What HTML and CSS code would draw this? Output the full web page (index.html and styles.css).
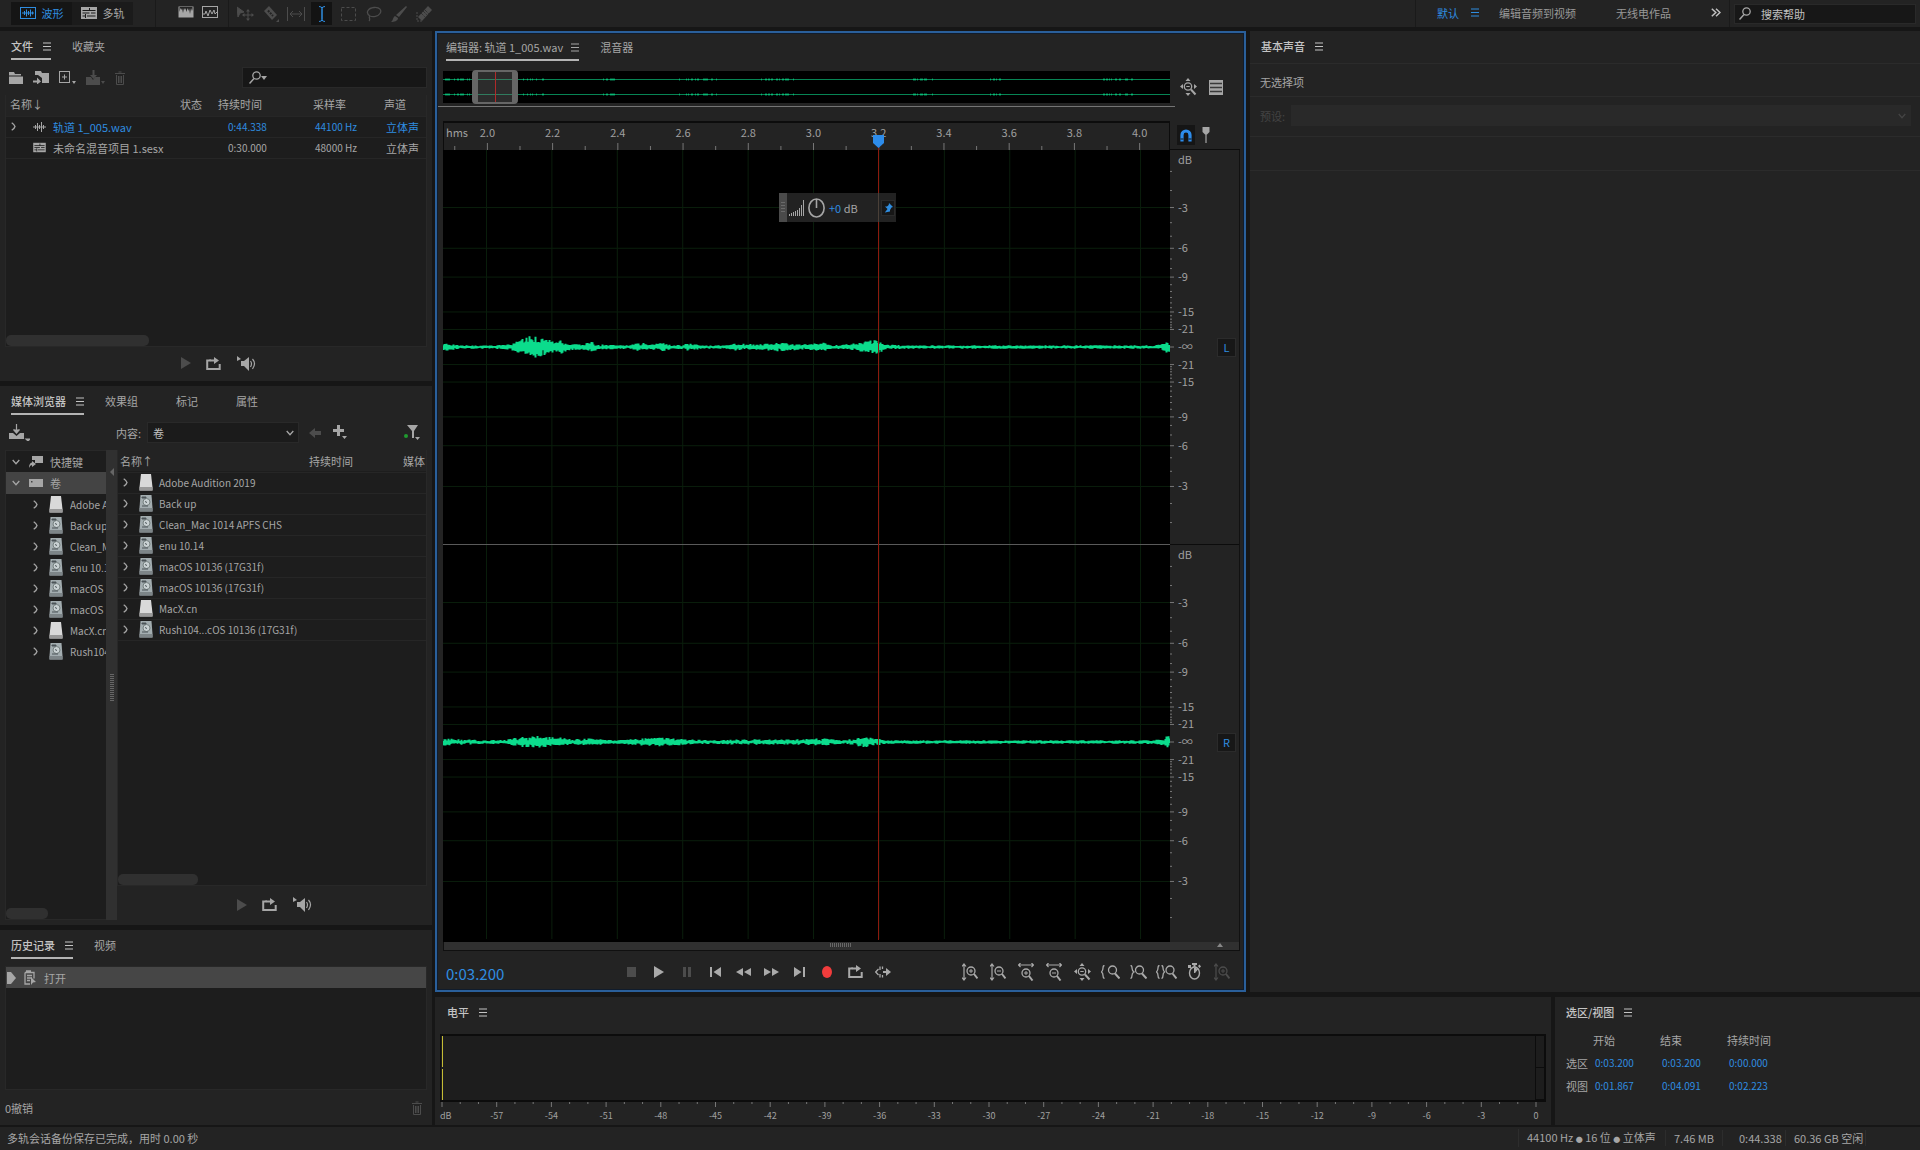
FILE: index.html
```
<!DOCTYPE html>
<html lang="zh-CN">
<head>
	<meta charset="UTF-8">
	<title>Audition</title>
	<link rel="stylesheet" href="styles.css">
</head>
<body>
<svg class="defs" aria-hidden="true">
	<symbol id="i-menu" viewBox="0 0 8 9"><path d="M0 1h8M0 4.500h8M0 8h8" stroke="currentColor"/></symbol>
	<symbol id="i-wave" viewBox="0 0 16 14"><rect x=".5" y="1.500" width="15" height="11" fill="none" stroke="currentColor"/><path d="M2 7h12M4.500 5v4M6.500 3.500v7M8.500 5v4M10.500 3.500v7M12.500 5.500v3" stroke="currentColor"/></symbol>
	<symbol id="i-multi" viewBox="0 0 16 14"><path d="M0 1h16v12H0z" fill="currentColor"/><path d="M1.500 4.500h13M1.500 7h7M10 7h4.500M1.500 10h3M6 10h8.500M8.500 2v3M4.500 8v4" stroke="#1b1b1b"/></symbol>
	<symbol id="i-spectrum" viewBox="0 0 16 14"><path d="M.5 1.500h15v11H.5z" fill="currentColor"/><path d="M1.500 2v5l1-4 1 2 .5-2 1 5 1-5 1 2 .5-2 1 4 1-4 1 3 .5-3 1 6 1-6 1 3 .5-2V2z" fill="#242424"/></symbol>
	<symbol id="i-pitch" viewBox="0 0 16 14"><rect x=".5" y="1.500" width="15" height="11" fill="none" stroke="currentColor"/><path d="M1 9h2l1-3 2 5 2-6 2 4 2-4 1 4 2-2" fill="none" stroke="currentColor"/></symbol>
	<symbol id="i-move" viewBox="0 0 17 16"><path d="M0 1l7 5-4 1-2 4zM11 4v10M6 9h10" fill="currentColor" stroke="currentColor"/><path d="M9 5.500L11 3l2 2.500zM9 12.500l2 2.500 2-2.500zM7.500 7L5 9l2.500 2zM14.500 7L17 9l-2.500 2z" fill="currentColor"/></symbol>
	<symbol id="i-razor" viewBox="0 0 16 16"><path d="M6 0l8 9-5 5-8-9z" fill="currentColor"/><path d="M5 4.500l5 5.500" stroke="#232323" stroke-width="2" stroke-dasharray="2 1"/><path d="M16 13v3h-3z" fill="currentColor"/></symbol>
	<symbol id="i-slip" viewBox="0 0 18 16"><path d="M.5 1v14M17.500 1v14M3 8h12M6 5L3 8l3 3M12 5l3 3-3 3" fill="none" stroke="currentColor"/></symbol>
	<symbol id="i-ibeam" viewBox="0 0 8 16"><path d="M1 .5q3 0 3 2v11q0 2-3 2M7 .5q-3 0-3 2v11q0 2 3 2" fill="none" stroke="currentColor"/></symbol>
	<symbol id="i-marquee" viewBox="0 0 15 16"><rect x=".5" y="1.500" width="14" height="13" fill="none" stroke="currentColor" stroke-dasharray="3 2"/></symbol>
	<symbol id="i-lasso" viewBox="0 0 16 16"><path d="M4 10C-1 7 2 2 8 1.500s8 3 6 6-7 4-10 2.500c-2 1 1 3-1 5" fill="none" stroke="currentColor" stroke-width="1.300"/></symbol>
	<symbol id="i-brush" viewBox="0 0 16 16"><path d="M15 0l1 1-8 10-3-2zM4 10l3 2c0 3-4 4-7 4 2-1 2-5 4-6z" fill="currentColor"/></symbol>
	<symbol id="i-heal" viewBox="0 0 16 16"><path d="M12 0l4 4-10 11-4-4z" fill="currentColor"/><path d="M7 5l4 4M5 7l4 4M9 4l4 4" stroke="#232323" stroke-dasharray="1 1"/><path d="M1 6v9h5" fill="none" stroke="currentColor" stroke-dasharray="2 1"/></symbol>
	<symbol id="i-folder" viewBox="0 0 14 12"><path d="M0 0h5l1 2h6v1.500H0zM0 4.500h14V12H0z" fill="currentColor"/></symbol>
	<symbol id="i-import" viewBox="0 0 16 13"><path d="M2 0h6l1 2h7v10H9V7L5 4H2zM0 9.500h4V6.500l4 4-4 3v-2H0z" fill="currentColor"/></symbol>
	<symbol id="i-new" viewBox="0 0 17 14"><rect x=".5" y=".5" width="10" height="11" fill="none" stroke="currentColor"/><path d="M3 6h5M5.500 3.500v5" stroke="currentColor"/><path d="M13 10h4l-2 3z" fill="currentColor"/></symbol>
	<symbol id="i-insert" viewBox="0 0 19 15"><path d="M0 7h5l2 3 2-3h5v8H0z" fill="currentColor"/><path d="M6.500 0h2v5H11L7.500 9 4 5h2.500zM15 11h4l-2 3z" fill="currentColor"/></symbol>
	<symbol id="i-trash" viewBox="0 0 10 14"><path d="M0 2.500h10M3.500 1h3" stroke="currentColor"/><path d="M1.500 4v9.500h7V4M3.500 5v7M5 5v7M6.500 5v7" fill="none" stroke="currentColor"/></symbol>
	<symbol id="i-search" viewBox="0 0 12 13"><circle cx="7.500" cy="4.500" r="3.700" fill="none" stroke="currentColor" stroke-width="1.300"/><path d="M5 7.500L.5 12.500" stroke="currentColor" stroke-width="1.500"/></symbol>
	<symbol id="i-down" viewBox="0 0 6 4"><path d="M0 0h6L3 4z" fill="currentColor"/></symbol>
	<symbol id="i-chevron" viewBox="0 0 5 9"><path d="M.7.700Q3.500 2.500 4 4.500 3.500 6.500.7 8.300" fill="none" stroke="currentColor" stroke-width="1.300"/></symbol>
	<symbol id="i-open" viewBox="0 0 8 6"><path d="M.7 1L4 4.700 7.300 1" fill="none" stroke="currentColor" stroke-width="1.300"/></symbol>
	<symbol id="i-audio" viewBox="0 0 13 10"><path d="M0 5h13M2.500 3v4M4.500 1v8M6.500 3v4M8.500 0v10M10.500 3v4" stroke="#a6a6a6"/></symbol>
	<symbol id="i-play" viewBox="0 0 10 12"><path d="M0 0l10 6-10 6z" fill="currentColor"/></symbol>
	<symbol id="i-loop" viewBox="0 0 15 13"><path d="M5 3.500H1.200v8.500h12.500V7" fill="none" stroke="currentColor" stroke-width="2"/><path d="M3 2.500h5V0l5 3.500-5 3.500V4.500H5z" fill="currentColor"/></symbol>
	<symbol id="i-speaker" viewBox="0 0 20 15"><path d="M1 0l4 3-4 2zM5 5h3l5-4v14l-5-5H5z" fill="currentColor"/><path d="M14.500 5q2 2.500 0 6M16.500 3q4 4.500 0 10" fill="none" stroke="currentColor" stroke-width="1.200"/></symbol>
	<symbol id="i-drive-in" viewBox="0 0 21 17"><path d="M0 9h4l3.500 3L11 9h4v6H0z" fill="currentColor"/><path d="M7.500 0v8M4.500 5.500l3 3.500 3-3.500M17 15h4l-2 2z" stroke="currentColor" stroke-width="1.200" fill="currentColor"/></symbol>
	<symbol id="i-back" viewBox="0 0 12 10"><path d="M0 5l6-5v3h6v4H6v3z" fill="currentColor"/></symbol>
	<symbol id="i-plus" viewBox="0 0 14 15"><path d="M4 0h3v4h4v3H7v4H4V7H0V4h4zM9 11h5l-2.500 3z" fill="currentColor"/></symbol>
	<symbol id="i-filter" viewBox="0 0 16 16"><path d="M3 0h11l-4 6v7H8V6zM11 12h5l-2.500 3z" fill="currentColor"/><circle cx="2" cy="11" r="2" fill="#1f9a2f"/></symbol>
	<symbol id="i-short" viewBox="0 0 14 14"><path d="M3 1h11v7H6V5H3zM0 13q0-5 3-5.500V6l4 3-4 3V10q-2 0-3 3z" fill="currentColor"/></symbol>
	<symbol id="i-volume" viewBox="0 0 14 8"><path d="M0 0h14v8H0z" fill="currentColor"/><path d="M2 2h1.500v1.500H2z" fill="#444"/></symbol>
	<symbol id="i-ext" viewBox="0 0 14 17"><path d="M2 0h10l1.500 13v3.500H.5V13z" fill="#d9d9d9"/><path d="M.5 13h13v3.500H.5z" fill="#999"/></symbol>
	<symbol id="i-hdd" viewBox="0 0 14 17"><path d="M1.500 0h11l1 13v3.500H.5V13z" fill="#a3adb0"/><path d="M.5 13h13v3.500H.5z" fill="#7d8588"/><circle cx="7.500" cy="7" r="3.500" fill="#c9d1d3" stroke="#75807f"/><path d="M3 2h4v1H3zM3 11h6M6 6.500l2 1" stroke="#4c5559" fill="#4c5559"/></symbol>
	<symbol id="i-marker" viewBox="0 0 9 12"><path d="M0 0h4l5 6-5 6H0z" fill="currentColor"/></symbol>
	<symbol id="i-history" viewBox="0 0 12 15"><path d="M1 2.500h9v6M1 2.500V14h5M3 5.500h5M3 8h5M3 10.500h3M2 1h5" fill="none" stroke="currentColor" stroke-width="1.300"/><path d="M7 7l5 5-3 .5L7 15z" fill="currentColor"/></symbol>
	<symbol id="i-more" viewBox="0 0 10 9"><path d="M.8.800l4 3.700-4 3.700M5 .8l4 3.700L5 8.200" fill="none" stroke="currentColor" stroke-width="1.500"/></symbol>
	<symbol id="i-fit" viewBox="0 0 17 18"><circle cx="8" cy="8.500" r="3.700" fill="none" stroke="currentColor" stroke-width="1.300"/><path d="M6.300 8.500h3.400" stroke="currentColor"/><path d="M11 11.500l4.500 5" stroke="currentColor" stroke-width="2"/><path d="M5.500 3L8 0l2.500 3zM5.500 15L8 18l2.500-3zM3 6L0 8.500 3 11zM14 6l3 2.500-3 2.500z" fill="currentColor"/></symbol>
	<symbol id="i-list" viewBox="0 0 14 15"><path d="M0 0h14v15H0z" fill="currentColor"/><path d="M1 3.500h12M1 7.500h12M1 11.500h12" stroke="#3a3a3a" stroke-width="1.500"/></symbol>
	<symbol id="i-magnet" viewBox="0 0 12 13"><path d="M2 12.500V6a4 4 0 0 1 8 0v6.500" fill="none" stroke="currentColor" stroke-width="3.200"/><path d="M.5 10h3M8.500 10h3" stroke="#151515"/></symbol>
	<symbol id="i-pin" viewBox="0 0 8 16"><path d="M.5 0h7v5L5 7.500H3L.5 5z" fill="currentColor"/><path d="M4 7v9" stroke="currentColor" stroke-width="1.200"/></symbol>
	<symbol id="i-head" viewBox="0 0 11 13"><path d="M0 0h11v8l-5.500 5L0 8z" fill="#2d8ceb"/></symbol>
	<symbol id="i-bars" viewBox="0 0 15 16"><path d="M.5 16v-2M2.500 16v-3M4.500 16v-4M6.500 16v-5M8.500 16v-6M10.500 16V8M12.500 16V5M14.500 16V0" stroke="currentColor"/></symbol>
	<symbol id="i-knob" viewBox="0 0 17 20"><ellipse cx="8.500" cy="10" rx="7.600" ry="9" fill="none" stroke="currentColor" stroke-width="1.600"/><path d="M8.500 1v9" stroke="currentColor" stroke-width="1.600"/></symbol>
	<symbol id="i-tack" viewBox="0 0 9 10"><path d="M5 0l4 4-1.500.5L6 7v1.500L.8 9.500l2.700-3.500L1 3.500h2L4.700 2z" fill="currentColor"/></symbol>
	<symbol id="i-stop" viewBox="0 0 9 10"><path d="M0 0h9v10H0z" fill="currentColor"/></symbol>
	<symbol id="i-pause" viewBox="0 0 8 10"><path d="M0 0h3v10H0zM5 0h3v10H5z" fill="currentColor"/></symbol>
	<symbol id="i-start" viewBox="0 0 11 10"><path d="M0 0h2v10H0zM11 0v10L3.500 5z" fill="currentColor"/></symbol>
	<symbol id="i-rew" viewBox="0 0 15 8"><path d="M7 0v8L0 4zM15 0v8L8 4z" fill="currentColor"/></symbol>
	<symbol id="i-ffw" viewBox="0 0 15 8"><path d="M0 0v8l7-4zM8 0v8l7-4z" fill="currentColor"/></symbol>
	<symbol id="i-end" viewBox="0 0 11 10"><path d="M9 0h2v10H9zM0 0v10l7.500-5z" fill="currentColor"/></symbol>
	<symbol id="i-rec" viewBox="0 0 10 12"><ellipse cx="5" cy="6" rx="5" ry="6" fill="#f13c3c"/></symbol>
	<symbol id="i-skip" viewBox="0 0 16 12"><path d="M3.500 3L.7 6l2.800 3M5 .5v3.500M5 8v3.500M7.500 .5V3M7.500 9v2.500" fill="none" stroke="currentColor" stroke-width="1.300"/><path d="M8 5h3V2l5 4-5 4V7H8z" fill="currentColor"/></symbol>
	<symbol id="i-vin" viewBox="0 0 16 18"><path d="M2 1v16M0 3.500L2 1l2 2.500M0 14.500L2 17l2-2.500" fill="none" stroke="currentColor" stroke-width="1.200"/><circle cx="9" cy="8" r="4" fill="none" stroke="currentColor" stroke-width="1.300"/><path d="M7 8h4M9 6v4" stroke="currentColor"/><path d="M12 11l3.500 4.500" stroke="currentColor" stroke-width="2"/></symbol>
	<symbol id="i-vout" viewBox="0 0 16 18"><path d="M2 1v16M0 3.500L2 1l2 2.500M0 14.500L2 17l2-2.500" fill="none" stroke="currentColor" stroke-width="1.200"/><circle cx="9" cy="8" r="4" fill="none" stroke="currentColor" stroke-width="1.300"/><path d="M7 8h4" stroke="currentColor"/><path d="M12 11l3.500 4.500" stroke="currentColor" stroke-width="2"/></symbol>
	<symbol id="i-hin" viewBox="0 0 16 18"><path d="M0 2h16M2.500 0L.5 2l2 2M13.500 0l2 2-2 2" fill="none" stroke="currentColor" stroke-width="1.200"/><circle cx="8" cy="10" r="4" fill="none" stroke="currentColor" stroke-width="1.300"/><path d="M6 10h4M8 8v4" stroke="currentColor"/><path d="M11 13l3.500 4.500" stroke="currentColor" stroke-width="2"/></symbol>
	<symbol id="i-hout" viewBox="0 0 16 18"><path d="M0 2h16M2.500 0L.5 2l2 2M13.500 0l2 2-2 2" fill="none" stroke="currentColor" stroke-width="1.200"/><circle cx="8" cy="10" r="4" fill="none" stroke="currentColor" stroke-width="1.300"/><path d="M6 10h4" stroke="currentColor"/><path d="M11 13l3.500 4.500" stroke="currentColor" stroke-width="2"/></symbol>
	<symbol id="i-zin" viewBox="0 0 19 14"><path d="M3.500.5Q2 .5 2 3t-1.500 4Q2 8 2 10.500T3.500 13.500" fill="none" stroke="currentColor" stroke-width="1.300"/><circle cx="11.500" cy="5" r="4" fill="none" stroke="currentColor" stroke-width="1.300"/><path d="M14 8.500l4.500 5" stroke="currentColor" stroke-width="2"/></symbol>
	<symbol id="i-zout" viewBox="0 0 17 14"><path d="M.5.500Q2 .5 2 3t2 4Q2 8 2 10.500T.5 13.500" fill="none" stroke="currentColor" stroke-width="1.300"/><circle cx="9.500" cy="5" r="4" fill="none" stroke="currentColor" stroke-width="1.300"/><path d="M12 8.500l4.500 5" stroke="currentColor" stroke-width="2"/></symbol>
	<symbol id="i-zsel" viewBox="0 0 21 14"><path d="M3.500.5Q2 .5 2 3t-1.500 4Q2 8 2 10.500T3.500 13.500M5.500.5Q7 .5 7 3t1.500 4Q7 8 7 10.500T5.500 13.500" fill="none" stroke="currentColor" stroke-width="1.300"/><circle cx="14" cy="5" r="4" fill="none" stroke="currentColor" stroke-width="1.300"/><path d="M16.500 8.500l4 5" stroke="currentColor" stroke-width="2"/></symbol>
	<symbol id="i-timer" viewBox="0 0 13 17"><ellipse cx="6.500" cy="10" rx="5" ry="6" fill="none" stroke="currentColor" stroke-width="1.400"/><path d="M6.500 10V5l3 1.500z" fill="currentColor" stroke="currentColor"/><path d="M4 0h5v2H7.500v2h-2V2H4zM0 2h3v3H0zM10 3l1.500-1.500 1.500 2-1.500 1.500z" fill="currentColor"/></symbol>
</svg>

<header class="topbar">
	<div class="mode">
		<button class="on"><svg width="16" height="14"><use href="#i-wave"/></svg>波形</button>
		<button><svg width="16" height="14"><use href="#i-multi"/></svg>多轨</button>
	</div>
	<div class="views">
		<button aria-label="频谱"><svg width="16" height="14"><use href="#i-spectrum"/></svg></button>
		<button aria-label="音高"><svg width="16" height="14"><use href="#i-pitch"/></svg></button>
	</div>
	<div class="tools">
		<button disabled aria-label="移动"><svg width="17" height="16"><use href="#i-move"/></svg></button>
		<button disabled aria-label="切断"><svg width="16" height="16"><use href="#i-razor"/></svg></button>
		<button disabled aria-label="滑动"><svg width="18" height="16"><use href="#i-slip"/></svg></button>
		<button class="on" aria-label="时间选择"><svg width="8" height="16"><use href="#i-ibeam"/></svg></button>
		<button disabled aria-label="框选"><svg width="15" height="16"><use href="#i-marquee"/></svg></button>
		<button disabled aria-label="套索"><svg width="16" height="16"><use href="#i-lasso"/></svg></button>
		<button disabled aria-label="画笔"><svg width="16" height="16"><use href="#i-brush"/></svg></button>
		<button disabled aria-label="修复"><svg width="16" height="16"><use href="#i-heal"/></svg></button>
	</div>
	<nav class="spaces">
		<button class="on">默认<svg width="8" height="9"><use href="#i-menu"/></svg></button>
		<button>编辑音频到视频</button>
		<button>无线电作品</button>
		<button class="more" aria-label="更多"><svg width="10" height="9"><use href="#i-more"/></svg></button>
	</nav>
	<label class="search help"><svg width="12" height="13"><use href="#i-search"/></svg><input type="text" placeholder="搜索帮助" aria-label="搜索帮助"></label>
</header>

<main class="work">
	<aside class="left">
		<section class="panel files">
			<div class="tabs lined"><button class="on">文件<svg width="8" height="9"><use href="#i-menu"/></svg></button><button>收藏夹</button></div>
			<div class="bar">
				<button aria-label="打开"><svg width="14" height="12"><use href="#i-folder"/></svg></button>
				<button aria-label="导入"><svg width="16" height="13"><use href="#i-import"/></svg></button>
				<button aria-label="新建"><svg width="17" height="14"><use href="#i-new"/></svg></button>
				<button disabled aria-label="插入"><svg width="19" height="15"><use href="#i-insert"/></svg></button>
				<button disabled aria-label="删除"><svg width="10" height="14"><use href="#i-trash"/></svg></button>
				<label class="search"><svg width="12" height="13"><use href="#i-search"/></svg><svg width="6" height="4"><use href="#i-down"/></svg><input type="text" aria-label="搜索文件"></label>
			</div>
			<div class="list">
				<table>
					<colgroup><col class="c-name"><col class="c-state"><col class="c-dur"><col class="c-rate"><col></colgroup>
					<thead><tr><th>名称↓</th><th>状态</th><th>持续时间</th><th>采样率</th><th>声道</th></tr></thead>
					<tbody>
						<tr class="on"><td><span class="cell"><svg class="tw" width="5" height="9"><use href="#i-chevron"/></svg><svg width="13" height="10"><use href="#i-audio"/></svg>轨道 1_005.wav</span></td><td></td><td class="num">0:44.338</td><td class="num">44100 Hz</td><td>立体声</td></tr>
						<tr><td><span class="cell"><i class="tw"></i><svg width="13" height="11"><use href="#i-multi"/></svg>未命名混音项目 1.sesx</span></td><td></td><td class="num">0:30.000</td><td class="num">48000 Hz</td><td>立体声</td></tr>
					</tbody>
				</table>
				<i class="scroll wide"></i>
			</div>
			<div class="preview">
				<button disabled aria-label="播放"><svg width="10" height="12"><use href="#i-play"/></svg></button>
				<button aria-label="循环"><svg width="15" height="13"><use href="#i-loop"/></svg></button>
				<button aria-label="自动播放"><svg width="20" height="15"><use href="#i-speaker"/></svg></button>
			</div>
		</section>

		<section class="panel media">
			<div class="tabs lined"><button class="on">媒体浏览器<svg width="8" height="9"><use href="#i-menu"/></svg></button><button>效果组</button><button class="far">标记</button><button class="far">属性</button></div>
			<div class="bar">
				<button class="drive" aria-label="导入"><svg width="21" height="17"><use href="#i-drive-in"/></svg></button>
				<label for="vol">内容:</label>
				<span class="pick"><select id="vol"><option>卷</option></select><svg width="8" height="6"><use href="#i-open"/></svg></span>
				<button disabled aria-label="后退"><svg width="12" height="10"><use href="#i-back"/></svg></button>
				<button aria-label="添加"><svg width="14" height="15"><use href="#i-plus"/></svg></button>
				<button class="filter" aria-label="筛选"><svg width="16" height="16"><use href="#i-filter"/></svg></button>
			</div>
			<div class="split">
				<ul class="tree">
					<li><svg width="8" height="6"><use href="#i-open"/></svg><svg width="14" height="14"><use href="#i-short"/></svg>快捷键</li>
					<li class="on"><svg width="8" height="6"><use href="#i-open"/></svg><svg width="14" height="8"><use href="#i-volume"/></svg>卷</li>
					<li class="sub"><svg width="5" height="9"><use href="#i-chevron"/></svg><svg width="14" height="17"><use href="#i-ext"/></svg><span>Adobe Audition 2019</span></li>
					<li class="sub"><svg width="5" height="9"><use href="#i-chevron"/></svg><svg width="14" height="17"><use href="#i-hdd"/></svg><span>Back up</span></li>
					<li class="sub"><svg width="5" height="9"><use href="#i-chevron"/></svg><svg width="14" height="17"><use href="#i-hdd"/></svg><span>Clean_Mac 1014</span></li>
					<li class="sub"><svg width="5" height="9"><use href="#i-chevron"/></svg><svg width="14" height="17"><use href="#i-hdd"/></svg><span>enu 10.14</span></li>
					<li class="sub"><svg width="5" height="9"><use href="#i-chevron"/></svg><svg width="14" height="17"><use href="#i-hdd"/></svg><span>macOS 10136</span></li>
					<li class="sub"><svg width="5" height="9"><use href="#i-chevron"/></svg><svg width="14" height="17"><use href="#i-hdd"/></svg><span>macOS 10136</span></li>
					<li class="sub"><svg width="5" height="9"><use href="#i-chevron"/></svg><svg width="14" height="17"><use href="#i-ext"/></svg><span>MacX.cn</span></li>
					<li class="sub"><svg width="5" height="9"><use href="#i-chevron"/></svg><svg width="14" height="17"><use href="#i-hdd"/></svg><span>Rush104</span></li>
					<li class="end"><i class="scroll"></i></li>
				</ul>
				<div class="splitter"><b></b><i class="grip"></i></div>
				<div class="right">
					<div class="list">
						<table>
							<colgroup><col class="c-name"><col class="c-dur"><col></colgroup>
							<thead><tr><th>名称↑</th><th>持续时间</th><th>媒体</th></tr></thead>
							<tbody>
								<tr><td colspan="3"><span class="cell"><svg width="5" height="9"><use href="#i-chevron"/></svg><svg width="14" height="17"><use href="#i-ext"/></svg>Adobe Audition 2019</span></td></tr>
								<tr><td colspan="3"><span class="cell"><svg width="5" height="9"><use href="#i-chevron"/></svg><svg width="14" height="17"><use href="#i-hdd"/></svg>Back up</span></td></tr>
								<tr><td colspan="3"><span class="cell"><svg width="5" height="9"><use href="#i-chevron"/></svg><svg width="14" height="17"><use href="#i-hdd"/></svg>Clean_Mac 1014 APFS CHS</span></td></tr>
								<tr><td colspan="3"><span class="cell"><svg width="5" height="9"><use href="#i-chevron"/></svg><svg width="14" height="17"><use href="#i-hdd"/></svg>enu 10.14</span></td></tr>
								<tr><td colspan="3"><span class="cell"><svg width="5" height="9"><use href="#i-chevron"/></svg><svg width="14" height="17"><use href="#i-hdd"/></svg>macOS 10136 (17G31f)</span></td></tr>
								<tr><td colspan="3"><span class="cell"><svg width="5" height="9"><use href="#i-chevron"/></svg><svg width="14" height="17"><use href="#i-hdd"/></svg>macOS 10136 (17G31f)</span></td></tr>
								<tr><td colspan="3"><span class="cell"><svg width="5" height="9"><use href="#i-chevron"/></svg><svg width="14" height="17"><use href="#i-ext"/></svg>MacX.cn</span></td></tr>
								<tr><td colspan="3"><span class="cell"><svg width="5" height="9"><use href="#i-chevron"/></svg><svg width="14" height="17"><use href="#i-hdd"/></svg>Rush104...cOS 10136 (17G31f)</span></td></tr>
							</tbody>
						</table>
						<i class="scroll mid"></i>
					</div>
					<div class="preview">
						<button disabled aria-label="播放"><svg width="10" height="12"><use href="#i-play"/></svg></button>
						<button aria-label="循环"><svg width="15" height="13"><use href="#i-loop"/></svg></button>
						<button aria-label="自动播放"><svg width="20" height="15"><use href="#i-speaker"/></svg></button>
					</div>
				</div>
			</div>
		</section>

		<section class="panel history">
			<div class="tabs lined"><button class="on">历史记录<svg width="8" height="9"><use href="#i-menu"/></svg></button><button>视频</button></div>
			<ul class="steps">
				<li><svg width="9" height="12"><use href="#i-marker"/></svg><svg width="12" height="15"><use href="#i-history"/></svg>打开</li>
			</ul>
			<div class="undo"><span>0撤销</span><button disabled aria-label="删除"><svg width="10" height="14"><use href="#i-trash"/></svg></button></div>
		</section>
	</aside>

	<div class="rest">
		<div class="upper">
			<section class="panel editor">
				<div class="tabs lined"><button class="on">编辑器: 轨道 1_005.wav<svg width="8" height="9"><use href="#i-menu"/></svg></button><button>混音器</button></div>
				<div class="over">
					<div class="lane">
						<div class="strip">
							<svg id="mini" viewBox="0 0 727 32" preserveAspectRatio="none"></svg>
							<div class="window"></div>
						</div>
					</div>
					<div class="side">
						<button aria-label="全部缩小"><svg width="17" height="18"><use href="#i-fit"/></svg></button>
						<button aria-label="显示"><svg width="14" height="15"><use href="#i-list"/></svg></button>
					</div>
				</div>
				<div class="stage">
					<div class="ruler"><svg id="time"></svg></div>
					<div class="snap">
						<button class="on" aria-label="对齐"><svg width="12" height="13"><use href="#i-magnet"/></svg></button>
						<button aria-label="标记"><svg width="8" height="16"><use href="#i-pin"/></svg></button>
					</div>
					<div class="waves">
						<div class="chan"><svg class="grid"></svg><svg class="wave" id="waveL" viewBox="0 -197 727 394" preserveAspectRatio="none"></svg></div>
						<div class="chan"><svg class="grid"></svg><svg class="wave" id="waveR" viewBox="0 -197 727 394" preserveAspectRatio="none"></svg></div>
					</div>
					<div class="scales">
						<div class="scale"><svg class="db"></svg><button>L</button></div>
						<div class="scale"><svg class="db"></svg><button>R</button></div>
					</div>
					<div class="playhead" id="head"><svg width="11" height="13"><use href="#i-head"/></svg></div>
					<div class="hud">
						<i class="handle"></i>
						<svg width="15" height="16"><use href="#i-bars"/></svg>
						<svg width="17" height="20"><use href="#i-knob"/></svg>
						<span><em>+0</em> dB</span>
						<button aria-label="固定"><svg width="9" height="10"><use href="#i-tack"/></svg></button>
					</div>
				</div>
				<div class="hscroll"><i></i><svg width="6" height="4"><use href="#i-down"/></svg></div>
				<div class="transport">
					<span class="clock">0:03.200</span>
					<div class="keys">
						<button disabled aria-label="停止"><svg width="9" height="10"><use href="#i-stop"/></svg></button>
						<button aria-label="播放"><svg width="10" height="12"><use href="#i-play"/></svg></button>
						<button disabled aria-label="暂停"><svg width="8" height="10"><use href="#i-pause"/></svg></button>
						<button aria-label="上一个"><svg width="11" height="10"><use href="#i-start"/></svg></button>
						<button aria-label="快退"><svg width="15" height="8"><use href="#i-rew"/></svg></button>
						<button aria-label="快进"><svg width="15" height="8"><use href="#i-ffw"/></svg></button>
						<button aria-label="下一个"><svg width="11" height="10"><use href="#i-end"/></svg></button>
						<button aria-label="录制"><svg width="10" height="12"><use href="#i-rec"/></svg></button>
						<button aria-label="循环"><svg width="15" height="13"><use href="#i-loop"/></svg></button>
						<button aria-label="跳过"><svg width="16" height="12"><use href="#i-skip"/></svg></button>
					</div>
					<div class="keys zoom">
						<button aria-label="放大振幅"><svg width="16" height="18"><use href="#i-vin"/></svg></button>
						<button aria-label="缩小振幅"><svg width="16" height="18"><use href="#i-vout"/></svg></button>
						<button aria-label="放大时间"><svg width="16" height="18"><use href="#i-hin"/></svg></button>
						<button aria-label="缩小时间"><svg width="16" height="18"><use href="#i-hout"/></svg></button>
						<button aria-label="全部"><svg width="17" height="18"><use href="#i-fit"/></svg></button>
						<button aria-label="入点"><svg width="19" height="14"><use href="#i-zin"/></svg></button>
						<button aria-label="出点"><svg width="17" height="14"><use href="#i-zout"/></svg></button>
						<button aria-label="选区"><svg width="21" height="14"><use href="#i-zsel"/></svg></button>
						<button aria-label="计时"><svg width="13" height="17"><use href="#i-timer"/></svg></button>
						<button disabled aria-label="轨道"><svg width="16" height="18"><use href="#i-vin"/></svg></button>
					</div>
				</div>
			</section>

			<section class="panel sound">
				<div class="tabs"><button class="on">基本声音<svg width="8" height="9"><use href="#i-menu"/></svg></button></div>
				<div class="none">无选择项</div>
				<div class="preset"><label for="pre">预设:</label><span class="pick"><select id="pre" disabled><option></option></select><svg width="8" height="6"><use href="#i-open"/></svg></span></div>
				<div class="line"></div>
			</section>
		</div>

		<div class="lower">
			<section class="panel levels">
				<div class="tabs"><button class="on">电平<svg width="8" height="9"><use href="#i-menu"/></svg></button></div>
				<div class="meter"><div class="m-main"><i></i><i></i></div><div class="clip"><i></i><i></i></div></div>
				<svg id="levels"></svg>
			</section>
			<section class="panel sel">
				<div class="tabs"><button class="on">选区/视图<svg width="8" height="9"><use href="#i-menu"/></svg></button></div>
				<table>
					<tr><td></td><th>开始</th><th>结束</th><th>持续时间</th></tr>
					<tr><th>选区</th><td>0:03.200</td><td>0:03.200</td><td>0:00.000</td></tr>
					<tr><th>视图</th><td>0:01.867</td><td>0:04.091</td><td>0:02.223</td></tr>
				</table>
			</section>
		</div>
	</div>
</main>

<footer class="status">
	<span class="msg">多轨会话备份保存已完成，用时 0.00 秒</span>
	<span class="fmt">44100 Hz <b>●</b> 16 位 <b>●</b> 立体声</span>
	<span class="size">7.46 MB</span>
	<span class="len">0:44.338</span>
	<span class="free">60.36 GB 空闲</span>
</footer>
<script src="script.js"></script>
</body>
</html>
```
FILE: styles.css
```
*{
	box-sizing:border-box;
}
body{
	margin:0;
	height:100vh;
	display:flex;
	flex-direction:column;
	background:#161616;
	color:#a6a6a6;
	font:11px/16px "Noto Sans CJK SC", sans-serif;
	overflow:hidden;
}
button,input,select{
	font:inherit;
	color:inherit;
	border:none;
	background:none;
	margin:0;
	padding:0;
	outline:none;
}
ul{
	margin:0;
	padding:0;
	list-style:none;
}
svg{
	display:block;
	flex:none;
}
button{
	display:flex;
	align-items:center;
	justify-content:center;
	flex:none;
	white-space:nowrap;
}
button:disabled{
	color:#4c4c4c;
}
table{
	border-collapse:collapse;
	table-layout:fixed;
	width:100%;
}
th,td{
	padding:0;
	font-weight:normal;
	text-align:left;
	white-space:nowrap;
}
.defs{
	position:absolute;
	width:0;
	height:0;
}

/* top bar */
.topbar{
	flex:none;
	height:27px;
	margin-bottom:4px;
	display:flex;
	align-items:center;
	background:#232323;
}
.mode{
	display:flex;
	margin-left:11px;
	background:#1b1b1b;
	height:23px;
}
.mode button{
	width:61px;
	gap:6px;
	padding-bottom:1px;
}
.mode .on{
	background:#151515;
}
.topbar .on,.mode .on{
	color:#2f8de0;
}
.views{
	display:flex;
	gap:8px;
	margin-left:22px;
	padding:5px 10px 8px 22px;
	border-left:1px solid #1a1a1a;
	border-right:1px solid #1a1a1a;
}
.tools{
	display:flex;
	align-items:center;
	margin-left:4px;
}
.tools button{
	width:25px;
	height:23px;
}
.tools .on{
	width:21px;
	margin:0 4px 0 3px;
	background:#131313;
}
.spaces{
	display:flex;
	align-items:center;
	height:27px;
	margin-left:auto;
	padding:0 8px 2px 21px;
	border-left:1px solid #1a1a1a;
	border-right:1px solid #1a1a1a;
	color:#999;
}
.spaces button{
	margin-right:40px;
}
.spaces .on{
	gap:12px;
	margin-right:20px;
}
.spaces .more{
	margin:0;
	color:#c0c0c0;
}
.search{
	display:flex;
	align-items:center;
	background:#171717;
	height:21px;
	padding:0 6px;
	border:1px solid #292929;
}
.search input{
	flex:1;
	min-width:0;
}
.search input::placeholder{
	color:#c0c0c0;
}
.help{
	width:182px;
	height:20px;
	margin:0 4px;
	padding:0 4px;
	gap:10px;
}

/* docking */
.work{
	flex:1;
	min-height:0;
	display:flex;
	gap:3px;
}
.left{
	width:432px;
	flex:none;
	display:flex;
	flex-direction:column;
	gap:5px;
}
.rest{
	flex:1;
	min-width:0;
	display:flex;
	flex-direction:column;
	gap:5px;
}
.upper{
	flex:1;
	min-height:0;
	display:flex;
	gap:4px;
}
.lower{
	height:128px;
	display:flex;
	gap:4px;
}
.panel{
	background:#232323;
	display:flex;
	flex-direction:column;
	min-width:0;
}
.tabs{
	display:flex;
	align-items:flex-start;
	height:36px;
	flex:none;
	padding:7px 11px 0;
	gap:21px;
}
.tabs button{
	height:22px;
	padding-bottom:4px;
	border-bottom:2px solid transparent;
}
.tabs .on{
	gap:10px;
	color:#c4c4c4;
	font-weight:500;
}
.lined .on{
	border-color:#b4b4b4;
}
.editor .tabs .on{
	font-weight:normal;
	color:#a6a6a6;
	gap:8px;
}
.files tr.on{
	color:#2f8de0;
}
.tabs .far{
	margin-left:17px;
}
.bar{
	display:flex;
	align-items:center;
	height:21px;
	flex:none;
}

/* files */
.files{
	height:350px;
}
.files .bar{
	padding:0 5px 0 9px;
	gap:10px;
}
.files .search{
	width:185px;
	margin-left:auto;
}
.list{
	flex:1;
	display:flex;
	flex-direction:column;
	background:linear-gradient(#232323 0 21px, #1d1d1d 21px);
	border:1px solid #282828;
	border-top:none;
}
.files .list{
	margin:7px 5px 0;
}
.files th{
	padding:0 0 2px 4px;
}
.list tr{
	height:21px;
}
.list tbody tr{
	border-top:1px solid #262626;
	border-bottom:1px solid #262626;
}
.files .c-name{
	width:170px;
}
.files .c-state{
	width:38px;
}
.files .c-dur{
	width:95px;
}
.files .c-rate{
	width:71px;
}
.files td:nth-child(3){
	padding-left:14px;
}
.files td:nth-child(4),.files td:nth-child(5){
	padding-left:6px;
}
.num{
	font-size:10px;
}
.cell{
	display:flex;
	align-items:center;
	gap:7px;
}
.cell .tw{
	width:5px;
	margin:0 10px 0 5px;
	color:#a6a6a6;
}
.scroll{
	width:42px;
	height:11px;
	border-radius:5px;
	background:#303030;
}
.scroll.wide{
	width:143px;
	margin-top:auto;
}
.scroll.mid{
	width:80px;
	margin-top:auto;
}
.preview{
	display:flex;
	justify-content:center;
	align-items:center;
	gap:15px;
	height:34px;
	flex:none;
	padding:0 0 2px 4px;
}

/* media */
.media{
	flex:1;
	min-height:0;
}
.bar .drive{
	margin:0 86px 0 9px;
}
.pick{
	display:flex;
	align-items:center;
	background:#1b1b1b;
	border:1px solid #292929;
	height:21px;
	padding-right:4px;
}
.pick select{
	appearance:none;
	flex:1;
	min-width:0;
	height:19px;
	padding-left:5px;
	color:#c0c0c0;
}
.bar .pick{
	width:152px;
	margin:0 10px 0 6px;
}
.bar .pick + button{
	margin-right:12px;
}
.bar .filter{
	margin:0 12px 0 auto;
}
.split{
	flex:1;
	min-height:0;
	display:flex;
	margin:7px 5px 5px;
}
.tree{
	width:101px;
	display:flex;
	flex-direction:column;
	overflow:hidden;
	background:#1d1d1d;
	border:1px solid #282828;
	border-right:none;
}
.tree li{
	display:flex;
	align-items:center;
	gap:7px;
	height:21px;
	flex:none;
	padding-left:6px;
	white-space:nowrap;
}
.tree span{
	flex:1;
	min-width:0;
	overflow:hidden;
}
.tree .on{
	height:22px;
	background:#444;
}
.tree svg:first-child{
	margin-right:2px;
}
.tree .sub{
	padding-left:27px;
	font-size:10px;
}
.tree .sub svg:first-child{
	margin-right:4px;
}
.tree .end{
	height:11px;
	margin-top:auto;
	padding:0;
}
.splitter{
	width:11px;
	background:#303030;
	display:flex;
	flex-direction:column;
	align-items:center;
	gap:198px;
	padding-top:18px;
}
.splitter b{
	border:4px solid transparent;
	border-left:none;
	border-right:4px solid #666;
}
.grip{
	width:4px;
	height:28px;
	background:repeating-linear-gradient(#666 0 1px, #303030 1px 2px);
}
.right{
	flex:1;
	min-width:0;
	display:flex;
	flex-direction:column;
}
.right .c-name{
	width:191px;
}
.right .c-dur{
	width:94px;
}
.right thead tr{
	height:22px;
}
.right th:first-child{
	padding-left:2px;
}
.right .cell{
	padding-left:5px;
	gap:6px;
	font-size:10px;
}
.right .cell svg:first-child{
	margin-right:5px;
}
.right .preview{
	padding:3px 0 0 4px;
}

/* history */
.history{
	height:195px;
}
.steps{
	flex:1;
	margin:0 5px;
	background:#1d1d1d;
	border:1px solid #282828;
}
.steps li{
	display:flex;
	align-items:center;
	gap:8px;
	height:21px;
	padding-left:1px;
	background:#464646;
}
.undo{
	display:flex;
	justify-content:space-between;
	align-items:center;
	height:35px;
	padding:1px 10px 0 5px;
}

/* editor */
.editor{
	flex:1 1 809px;
	border:2px solid #2a5f9a;
	outline:1px solid #101c2c;
	outline-offset:-3px;
}
.sound{
	flex:1 1 668px;
}
.editor .tabs{
	height:38px;
	padding:6px 9px 0;
}
.over{
	display:flex;
	height:36px;
	flex:none;
}
.lane{
	flex:1;
	padding:0 5px 0 6px;
	border-bottom:1px solid #747474;
}
.strip{
	height:32px;
	position:relative;
	background:#000;
}
.strip > svg{
	width:100%;
	height:100%;
}
.side{
	width:69px;
	display:flex;
	height:32px;
}
.side button{
	width:27px;
}
.window{
	position:absolute;
	left:4%;
	top:-1px;
	width:46px;
	height:34px;
	border:2px solid #666;
	border-width:2px 6px;
	border-radius:4px;
	background:linear-gradient(90deg, transparent 50%, #b02a2a 50% calc(50% + 1px), transparent 0), rgba(110,110,110,.4);
}
.stage{
	flex:1;
	min-height:0;
	position:relative;
	display:grid;
	grid-template:29px 1fr / 1fr 70px;
	margin:14px 4px 0 6px;
}
.ruler{
	border:1px solid #0c0c0c;
	border-top-width:2px;
	border-bottom:none;
	background:#232323;
}
.ruler svg{
	width:100%;
	height:27px;
	overflow:visible;
}
svg text{
	fill:#a0a0a0;
}
svg line{
	stroke:#777;
}
.snap{
	display:flex;
	align-items:center;
	gap:7px;
	padding-left:7px;
	border-bottom:1px solid #0c0c0c;
}
.snap .on{
	width:18px;
	height:20px;
	color:#2d8ceb;
	background:#151515;
}
.waves,.scales{
	display:flex;
	flex-direction:column;
	padding-bottom:3px;
	background:#000;
}
.scales{
	background:#232323;
	border-right:1px solid #111;
}
.chan,.scale{
	flex:1;
	min-height:0;
	display:grid;
}
.chan + .chan{
	border-top:1px solid #5a5a5a;
}
.scale + .scale{
	border-top:1px solid #0c0c0c;
}
.chan svg{
	grid-area:1/1;
	width:100%;
	height:100%;
}
.grid line{
	stroke:#0a1e0c;
}
.wave path,#mini path{
	stroke:#0bdc8c;
	fill:none;
}
.wave path{
	stroke-width:2;
}
.scale{
	display:flex;
	align-items:center;
	justify-content:space-between;
	padding-right:3px;
}
.scale svg{
	width:40px;
	height:100%;
	overflow:visible;
}
.scale button,.hud button{
	width:19px;
	height:19px;
	background:#171717;
	border:1px solid #2b2b2b;
	color:#2f8de0;
}
.playhead{
	position:absolute;
	top:14px;
	bottom:0;
	width:11px;
	margin-left:-6px;
	background:linear-gradient(90deg, transparent 5px, #8c1a0e 5px 6px, transparent 6px);
}
.hud{
	position:absolute;
	left:336px;
	top:72px;
	width:117px;
	height:29px;
	display:flex;
	align-items:center;
	gap:4px;
	background:linear-gradient(90deg, transparent 99px, #4a4038 99px 100px, transparent 100px), #222;
	padding-right:1px;
}
.hud .handle{
	width:8px;
	height:29px;
	margin-right:-2px;
	background:repeating-linear-gradient(#6a6a6a 0 1px, transparent 1px 3px) 2px 9px / 4px 12px no-repeat, #4a4a4a;
}
.hud em{
	color:#2f8de0;
	font-style:normal;
}
.hud button{
	width:14px;
	height:16px;
	margin-left:auto;
}
.hscroll{
	display:flex;
	align-items:center;
	height:11px;
	flex:none;
	margin:0 4px 0 6px;
	background:#303030;
	border:1px solid #101010;
	border-top:none;
	padding-left:386px;
}
.hscroll i{
	width:22px;
	height:4px;
	background:repeating-linear-gradient(90deg, #666 0 1px, #303030 1px 2px);
}
.hscroll svg{
	transform:rotate(180deg);
	margin:0 16px 0 auto;
	color:#888;
}
.transport{
	display:flex;
	align-items:center;
	height:39px;
	flex:none;
	padding:2px 8px 0 9px;
}
.clock{
	width:171px;
	padding-top:4px;
	font-size:15px;
	line-height:20px;
	color:#2f8de0;
}
.keys{
	display:flex;
	color:#aaa;
}
.keys button{
	width:28px;
	height:18px;
}
.keys.zoom{
	margin-left:auto;
}

/* essential sound */
.sound .tabs{
	height:33px;
	border-bottom:1px solid #2b2b2b;
}
.sound .none{
	height:33px;
	padding:10px 10px 0;
	border-bottom:1px solid #2b2b2b;
}
.preset{
	display:flex;
	align-items:center;
	height:40px;
	padding:0 9px 2px 10px;
	gap:6px;
	color:#444;
	border-bottom:1px solid #2b2b2b;
}
.preset .pick{
	flex:1;
	background:#292929;
}
.sound .line{
	height:34px;
	border-bottom:1px solid #2b2b2b;
}

/* levels */
.levels{
	flex:1;
	padding:0 5px;
}
.levels .tabs,.sel .tabs{
	height:37px;
	padding-left:7px;
}
.meter{
	display:flex;
	height:68px;
	flex:none;
	background:#1d1d1d;
	border:2px solid #0c0c0c;
	border-left-width:1px;
}
.m-main{
	flex:1;
}
.m-main i{
	display:block;
	width:1px;
	height:31px;
	margin:0 0 2px 1px;
	background:#c4bc34;
}
.clip{
	width:9px;
	border-left:1px solid #0c0c0c;
}
.clip i{
	display:block;
	height:32px;
	border-bottom:1px solid #0c0c0c;
}
#levels{
	width:calc(100% - 12px);
	height:22px;
	margin-left:2px;
	overflow:visible;
	font-size:9px;
}

/* selection */
.sel{
	width:365px;
	padding-left:5px;
}
.sel .tabs{
	padding-left:6px;
}
.sel table{
	width:228px;
	margin-left:6px;
	margin-top:-6px;
}
.sel tr{
	height:23px;
}
.sel td{
	color:#2f8de0;
	padding-left:2px;
	font-size:10px;
}
.sel tr :first-child{
	width:27px;
	padding:0;
}

/* status bar */
.status{
	display:flex;
	align-items:center;
	height:23px;
	flex:none;
	margin-top:2px;
	padding:0 54px 2px 7px;
	background:#232323;
}
.status span + span{
	padding-left:8px;
	border-left:1px solid #2d2d2d;
}
.status b{
	font-size:7px;
	font-weight:normal;
}
.msg{
	flex:1;
}
.fmt{
	width:147px;
}
.size{
	width:57px;
}
.status .len{
	width:63px;
	padding-left:16px;
}
.free{
	width:81px;
	border-right:1px solid #2d2d2d;
}
```
FILE: script.js
```
var from = 1.867;
var span = 2.223;

function px(t){
	return (t - from) / span * 100 + '%';
}
function line(x1, y1, x2, y2){
	return '<line x1="' + x1 + '" y1="' + y1 + '" x2="' + x2 + '" y2="' + y2 + '"/>';
}
function text(x, y, s, anchor){
	return '<text x="' + x + '" y="' + y + '" text-anchor="' + (anchor || 'start') + '">' + s + '</text>';
}

// time ruler
var out = text(2, 14, 'hms');
for(var i = 19; i <= 40; i++){
	var x = px(i / 10);
	if(i % 2){
		out += line(x, 23, x, 27);
	}else{
		out += line(x, 20, x, 27) + text(x, 14, (i / 10).toFixed(1), 'middle');
	}
}
document.getElementById('time').innerHTML = out;
document.getElementById('head').style.left = 'calc((100% - 70px) * ' + (3.2 - from) / span + ')';

// dB grid and scale, both halves of a channel
var marks = [3, 6, 9, 15, 21];
function dbY(db, sign){
	return 50 + sign * 50 * Math.pow(10, -db / 20) + '%';
}
var grid = '', scale = text(8, 14, 'dB');
for(i = 20; i <= 40; i += 2){
	grid += line(px(i / 10), 0, px(i / 10), '100%');
}
[-1, 1].forEach(function(sign){
	for(var db = 1; db <= 21; db++){
		var y = dbY(db, sign);
		var big = marks.indexOf(db) > -1;
		scale += line(0, y, big ? 4 : 2, y);
		if(big){
			grid += line(0, y, '100%', y);
			scale += '<text x="8" y="' + y + '" dy="4">-' + db + '</text>';
		}
	}
});
scale += line(0, '50%', 4, '50%') + '<text x="8" y="50%" dy="4">-∞</text>';
document.querySelectorAll('.grid').forEach(function(el){ el.innerHTML = grid; });
document.querySelectorAll('.db').forEach(function(el){ el.innerHTML = scale; });

// waveforms: [x, amplitude] envelope with noise on top
var envL = [[0,4],[8,4],[15,2],[50,2],[66,3],[74,7],[86,12],[90,13],[100,11],[112,7],[117,9],[125,4],[138,3],[147,6],[155,3],[185,2],[197,5],[207,3],[218,5],[230,2],[245,4],[260,2],[282,2],[292,4],[315,3],[337,5],[350,4],[365,3],[379,5],[390,2],[402,3],[412,4],[420,6],[428,8],[436,7],[441,3],[460,2],[560,2],[620,2],[700,2],[712,2],[720,4],[724,8],[727,7]];
var envR = [[0,4],[20,3],[45,2],[64,3],[75,6],[90,7],[110,6],[130,3],[147,4],[170,2],[197,4],[218,5],[245,3],[270,2],[295,3],[350,3],[379,4],[400,2],[412,4],[423,7],[432,4],[445,2],[560,2],[700,2],[715,3],[724,7],[727,5]];

function rnd(n){
	var v = Math.sin(n * 127.1) * 43758.5453;
	return v - Math.floor(v);
}
function amp(env, x){
	for(var k = 1; k < env.length; k++){
		if(x <= env[k][0]){
			var a = env[k - 1], b = env[k];
			return a[1] + (b[1] - a[1]) * (x - a[0]) / (b[0] - a[0]);
		}
	}
	return 1;
}
function draw(id, env, seed){
	var d = '';
	for(var x = 0; x < 727; x++){
		var a = amp(env, x);
		var up = Math.max(0.7, a * (0.2 + 0.7 * rnd(x + seed)));
		var dn = Math.max(0.7, a * (0.2 + 0.7 * rnd(x + seed + 0.5)));
		d += 'M' + (x + 0.5) + ' ' + (-up).toFixed(1) + 'V' + dn.toFixed(1);
	}
	document.getElementById(id).innerHTML = '<path d="' + d + '"/>';
}
draw('waveL', envL, 1);
draw('waveR', envR, 900);

// overview strip
var d = 'M0 8.500H727M0 23.500H727';
var peaks = '';
var bursts = [[0, 28], [80, 102], [158, 172], [236, 274], [318, 354], [470, 490], [545, 560], [660, 690]];
bursts.forEach(function(b){
	for(var x = b[0]; x < b[1]; x++){
		if(rnd(x) > 0.5){
			peaks += 'M' + (x + 0.5) + ' 7.500v2M' + (x + 0.5) + ' 22.500v2';
		}
	}
});
document.getElementById('mini').innerHTML = '<path d="' + d + '" opacity=".6"/><path d="' + peaks + '" opacity=".6"/>';

// level meter scale
out = '';
for(i = 60; i >= 0; i--){
	x = (60 - i) / 60 * 100 + '%';
	out += line(x, 0, x, i % 3 ? 2 : 5);
	if(i % 3 == 0){
		out += i == 60 ? text(-2, 17, 'dB') : text(x, 17, i ? '-' + i : '0', 'middle');
	}
}
document.getElementById('levels').innerHTML = out;
```
